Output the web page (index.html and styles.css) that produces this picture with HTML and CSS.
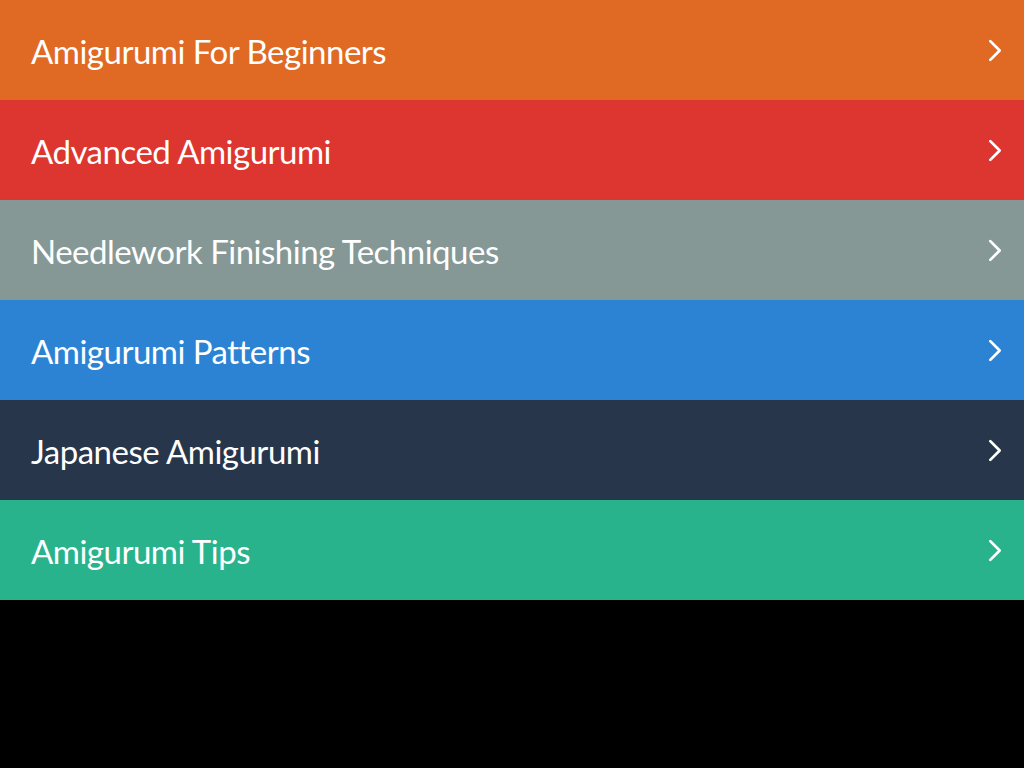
FILE: index.html
```
<!DOCTYPE html>
<html>
<head>
<meta charset="utf-8">
<link rel="stylesheet" href="styles.css">
</head>
<body>
<ul class="menu">
  <li class="item orange"><span class="label">Amigurumi For Beginners</span><svg class="chev" viewBox="0 0 16 24"><path d="M3 3 L12 12 L3 21"/></svg></li>
  <li class="item red"><span class="label">Advanced Amigurumi</span><svg class="chev" viewBox="0 0 16 24"><path d="M3 3 L12 12 L3 21"/></svg></li>
  <li class="item gray"><span class="label">Needlework Finishing Techniques</span><svg class="chev" viewBox="0 0 16 24"><path d="M3 3 L12 12 L3 21"/></svg></li>
  <li class="item blue"><span class="label">Amigurumi Patterns</span><svg class="chev" viewBox="0 0 16 24"><path d="M3 3 L12 12 L3 21"/></svg></li>
  <li class="item navy"><span class="label">Japanese Amigurumi</span><svg class="chev" viewBox="0 0 16 24"><path d="M3 3 L12 12 L3 21"/></svg></li>
  <li class="item teal"><span class="label">Amigurumi Tips</span><svg class="chev" viewBox="0 0 16 24"><path d="M3 3 L12 12 L3 21"/></svg></li>
</ul>
</body>
</html>
```
FILE: styles.css
```
html, body {
  margin: 0;
  padding: 0;
  background: #000;
  height: 100%;
}
.menu {
  list-style: none;
  margin: 0;
  padding: 0;
}
.item {
  height: 100px;
  display: flex;
  align-items: center;
  justify-content: space-between;
  padding: 0 20px 0 31px;
  color: #fff;
  font-family: "Lato", "Open Sans", sans-serif;
  font-size: 33px;
  letter-spacing: -0.5px;
}
.label {
  margin-top: 2px;
}
.chev {
  width: 17px;
  height: 25px;
  fill: none;
  stroke: #fff;
  stroke-width: 2.6;
  stroke-linecap: round;
  stroke-linejoin: round;
}
.orange { background: #e06923; }
.red { background: #dd352f; }
.gray { background: #859896; }
.blue { background: #2d83d3; }
.navy { background: #27364b; }
.teal { background: #28b38c; }
```
